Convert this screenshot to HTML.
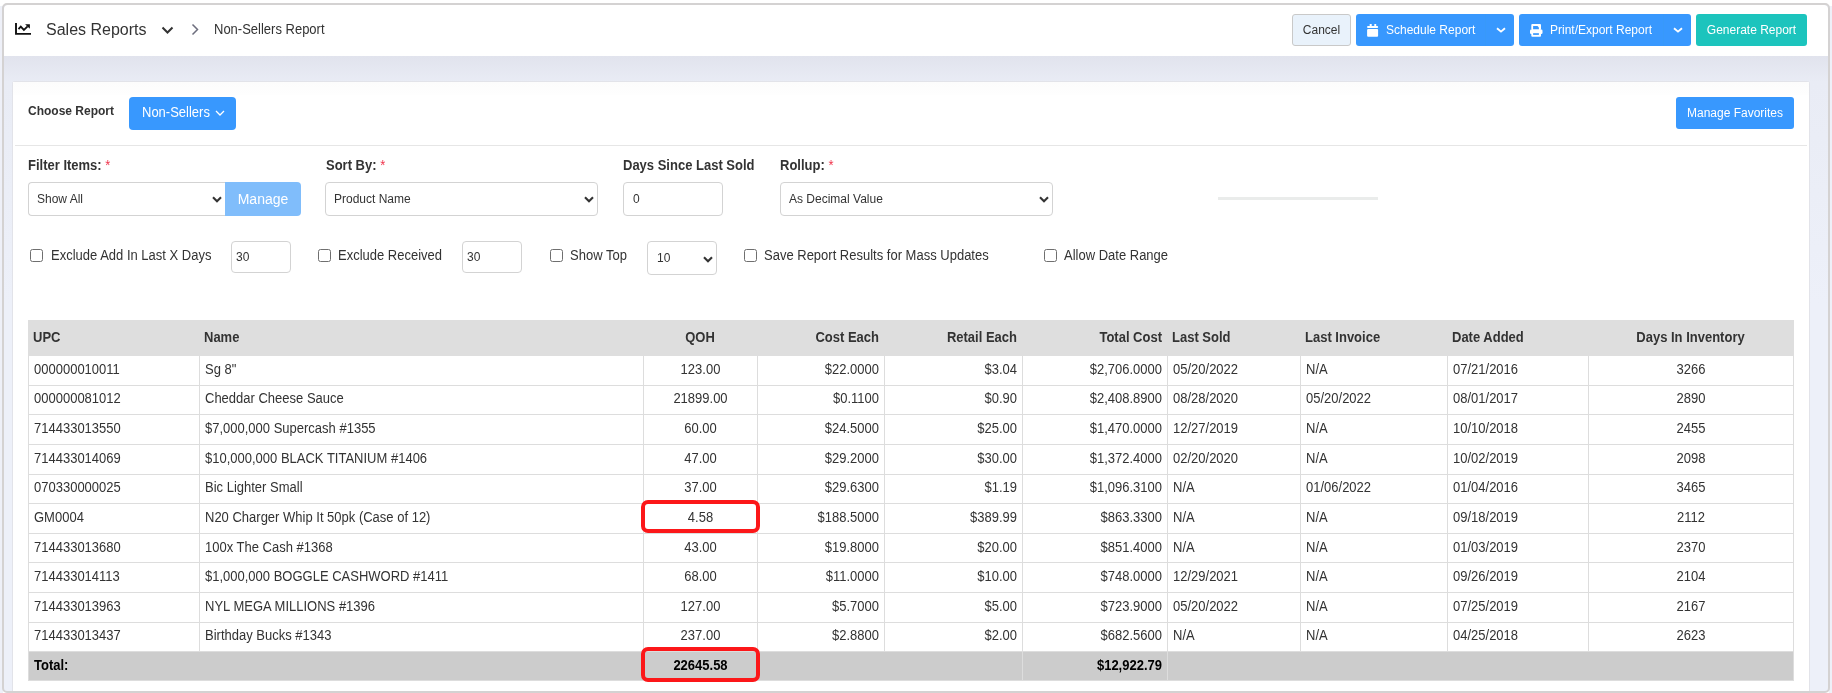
<!DOCTYPE html>
<html><head><meta charset="utf-8">
<style>
*{box-sizing:border-box;margin:0;padding:0}
html,body{width:1832px;height:693px;overflow:hidden;background:#fff;font-family:"Liberation Sans",sans-serif;color:#333;position:relative}
.abs{position:absolute}
#bg{position:absolute;left:3px;top:4px;width:1826px;height:688px;background:linear-gradient(to bottom,#e1e3ed 52px,#e9ecf5 78px,#edf0f9 300px);border-radius:5px}
#outl{position:absolute;left:0;top:6px;width:3px;height:687px;background:#eef0f8}
#outr{position:absolute;left:1829px;top:6px;width:3px;height:687px;background:#eef0f8}
#frame{position:absolute;left:2px;top:3px;width:1828px;height:690px;border:2px solid #d4d2d2;border-radius:5px;z-index:10}
#hdr{position:absolute;left:4px;top:5px;width:1824px;height:51px;background:#fff;border-radius:4px 4px 0 0}
#card{position:absolute;left:12px;top:81px;width:1798px;height:610px;background:#fff;border:1px solid #e2e3e9;border-bottom:none;border-radius:3px 3px 0 0}
.btn{position:absolute;border-radius:3px;color:#fff;font-size:12px;line-height:32px;white-space:nowrap}
.lbl{position:absolute;font-weight:bold;font-size:13px;color:#333;white-space:nowrap;line-height:15px;transform:scaleY(1.08);transform-origin:0 12px}
.req{color:#f0334b;font-weight:normal}
.inp{position:absolute;border:1px solid #d3d3d3;border-radius:4px;background:#fff;font-size:12px;color:#333;white-space:nowrap}
.chk{position:absolute;width:13px;height:13px;border:1px solid #6f6f6f;border-radius:2.5px;background:#fff}
.ct{position:absolute;font-size:13px;color:#333;white-space:nowrap;line-height:15px;transform:scaleY(1.08);transform-origin:0 12px}
.sel svg{position:absolute}
table{position:absolute;left:28px;top:320px;border-collapse:collapse;table-layout:fixed;font-size:13px;color:#333}
td,th{border:1px solid #dddddd;padding:0 5px 2px 5px;white-space:nowrap;overflow:hidden}
th{background:#dedede;border-color:#dedede;font-weight:bold;height:35px;text-align:left;padding-left:4px}
td{height:29.64px}
.r{text-align:right}.c{text-align:center}
.sy{display:inline-block;transform:scaleY(1.08);transform-origin:0 12px}
tr.tot td{background:#cccccc;color:#000;font-weight:bold;height:29px;padding-bottom:2px}
.red{position:absolute;border:4px solid #fc1719;border-radius:7px;z-index:5}
</style></head><body><div id="root" style="position:absolute;left:0;top:0;width:1832px;height:693px;will-change:transform">
<div id="outl"></div><div id="outr"></div><div id="bg"></div>
<div id="hdr"></div>
<div id="frame"></div>

<!-- header -->
<svg class="abs" style="left:12px;top:20px" width="22" height="18" viewBox="0 0 22 18">
  <path d="M4 3V13.9H19" fill="none" stroke="#111" stroke-width="1.9"/>
  <path d="M6.5 9.2L8.8 6.6L11.9 9.9L15.6 6.3" fill="none" stroke="#111" stroke-width="1.8" stroke-linejoin="miter"/>
  <path d="M13.1 4.2H17.9V8.8Z" fill="#111"/>
</svg>
<div class="abs" style="left:46px;top:20px;font-size:16px;line-height:19px;color:#333">Sales Reports</div>
<svg class="abs" style="left:161px;top:26px" width="13" height="9" viewBox="0 0 13 9"><path d="M1.5 1.5L6.5 6.5L11.5 1.5" fill="none" stroke="#333" stroke-width="2"/></svg>
<svg class="abs" style="left:190.5px;top:23px" width="9" height="13" viewBox="0 0 9 13"><path d="M1.5 1.5L6.5 6.5L1.5 11.5" fill="none" stroke="#6d6e7e" stroke-width="1.5"/></svg>
<div class="abs" style="left:214px;top:22px;font-size:13px;line-height:15px;color:#333;transform:scaleY(1.08);transform-origin:0 12px">Non-Sellers Report</div>

<div class="btn" style="left:1292px;top:14px;width:59px;height:32px;background:#e9f2fb;border:1px solid #c9c9c9;color:#333;text-align:center;line-height:30px">Cancel</div>
<div class="btn" style="left:1356px;top:14px;width:158px;height:32px;background:#3898fe">
  <svg class="abs" style="left:11px;top:10px" width="12" height="14" viewBox="0 0 12 14"><rect x="0.1" y="2" width="11" height="2.1" rx="0.8" fill="#fff"/><rect x="0.1" y="5" width="11" height="7.8" rx="1" fill="#fff"/><rect x="2.7" y="0" width="2" height="3" fill="#fff"/><rect x="7.3" y="0" width="1.9" height="3" fill="#fff"/></svg>
  <span class="abs" style="left:30px;top:0">Schedule Report</span>
  <div class="abs" style="left:129px;top:0;width:1px;height:32px;background:#3899f9"></div>
  <svg class="abs" style="left:140px;top:13px" width="10" height="6" viewBox="0 0 10 6"><path d="M1 1.2L5 4.6L9 1.2" fill="none" stroke="#fff" stroke-width="1.9"/></svg>
</div>
<div class="btn" style="left:1519px;top:14px;width:172px;height:32px;background:#3898fe">
  <svg class="abs" style="left:11px;top:10px" width="13" height="14" viewBox="0 0 13 14"><rect x="1.3" y="0" width="9.7" height="6" rx="1" fill="#fff"/><path d="M3.1 2.1H7.5L8.9 3.5V5.6H3.1Z" fill="#3898fe"/><rect x="0" y="5.5" width="12.5" height="4.4" rx="1.2" fill="#fff"/><rect x="1.3" y="8.7" width="9.7" height="4.1" rx="1" fill="#fff"/><rect x="3.1" y="9.2" width="5.8" height="1.7" fill="#3898fe"/></svg>
  <span class="abs" style="left:31px;top:0">Print/Export Report</span>
  <div class="abs" style="left:144px;top:0;width:1px;height:32px;background:#3899f9"></div>
  <svg class="abs" style="left:154px;top:13px" width="10" height="6" viewBox="0 0 10 6"><path d="M1 1.2L5 4.6L9 1.2" fill="none" stroke="#fff" stroke-width="1.9"/></svg>
</div>
<div class="btn" style="left:1696px;top:14px;width:111px;height:32px;background:#1cc4bd;text-align:center">Generate Report</div>

<!-- card -->
<div id="card"></div>
<div class="abs" style="left:13px;top:82px;width:1796px;height:13px;background:linear-gradient(#fcfcfc,#fdfdfd 50%,#fefefe)"></div>
<div class="lbl" style="left:28px;top:104px;font-size:12px;transform:none">Choose Report</div>
<div class="btn" style="left:129px;top:97px;width:107px;height:33px;border-radius:4px;background:#3898fe;font-size:13px;line-height:33px">
  <span class="abs" style="left:13px;top:-1px;transform:scaleY(1.08);transform-origin:0 21px">Non-Sellers</span>
  <svg class="abs" style="left:86px;top:13px" width="10" height="6" viewBox="0 0 10 6"><path d="M1 1L5 5L9 1" fill="none" stroke="#fff" stroke-width="1.3"/></svg>
</div>
<div class="btn" style="left:1676px;top:97px;width:118px;height:32px;border-radius:3px;background:#3898fe;text-align:center">Manage Favorites</div>
<div class="abs" style="left:15px;top:145px;width:1792px;height:1px;background:#e6e6e6"></div>

<div class="lbl" style="left:28px;top:158px">Filter Items: <span class="req">*</span></div>
<div class="lbl" style="left:326px;top:158px">Sort By: <span class="req">*</span></div>
<div class="lbl" style="left:623px;top:158px">Days Since Last Sold</div>
<div class="lbl" style="left:780px;top:158px">Rollup: <span class="req">*</span></div>
<!-- form row 1 -->
<div class="inp" style="left:28px;top:182px;width:198px;height:34px;border-radius:4px 0 0 4px;border-right:none"><span class="abs" style="left:8px;top:9px">Show All</span>
<svg class="abs" style="left:183px;top:12.8px" width="10" height="7" viewBox="0 0 10 7"><path d="M1 1.2L5 5.2L9 1.2" fill="none" stroke="#333" stroke-width="2.1"/></svg></div>
<div class="btn" style="left:225px;top:182px;width:76px;height:34px;border-radius:0 4px 4px 0;background:#80bdfb;font-size:14px;line-height:34px;text-align:center">Manage</div>
<div class="inp" style="left:325px;top:182px;width:273px;height:34px"><span class="abs" style="left:8px;top:9px">Product Name</span>
<svg class="abs" style="left:258px;top:13px" width="10" height="7" viewBox="0 0 10 7"><path d="M1 1.2L5 5.2L9 1.2" fill="none" stroke="#333" stroke-width="2.1"/></svg></div>
<div class="inp" style="left:623px;top:182px;width:100px;height:34px"><span class="abs" style="left:9px;top:9px">0</span></div>
<div class="inp" style="left:780px;top:182px;width:273px;height:34px"><span class="abs" style="left:8px;top:9px">As Decimal Value</span>
<svg class="abs" style="left:258px;top:13px" width="10" height="7" viewBox="0 0 10 7"><path d="M1 1.2L5 5.2L9 1.2" fill="none" stroke="#333" stroke-width="2.1"/></svg></div>
<div class="abs" style="left:1218px;top:197px;width:160px;height:3px;background:#eaeceb"></div>

<!-- form row 2 -->
<div class="chk" style="left:30px;top:249px"></div>
<div class="ct" style="left:51px;top:248px">Exclude Add In Last X Days</div>
<div class="inp" style="left:231px;top:241px;width:60px;height:32px"><span class="abs" style="left:4px;top:8px">30</span></div>
<div class="chk" style="left:318px;top:249px"></div>
<div class="ct" style="left:338px;top:248px">Exclude Received</div>
<div class="inp" style="left:462px;top:241px;width:60px;height:32px"><span class="abs" style="left:4px;top:8px">30</span></div>
<div class="chk" style="left:550px;top:249px"></div>
<div class="ct" style="left:570px;top:248px">Show Top</div>
<div class="inp" style="left:647px;top:241px;width:70px;height:34px"><span class="abs" style="left:9px;top:9px">10</span>
<svg class="abs" style="left:55px;top:13.5px" width="10" height="7" viewBox="0 0 10 7"><path d="M1 1.2L5 5.2L9 1.2" fill="none" stroke="#333" stroke-width="2.1"/></svg></div>
<div class="chk" style="left:744px;top:249px"></div>
<div class="ct" style="left:764px;top:248px">Save Report Results for Mass Updates</div>
<div class="chk" style="left:1044px;top:249px"></div>
<div class="ct" style="left:1064px;top:248px">Allow Date Range</div>

<!-- red highlight boxes -->
<div class="red" style="left:641px;top:500px;width:119px;height:33px"></div>
<div class="red" style="left:641px;top:647px;width:119px;height:35px"></div>

<table>
<colgroup><col style="width:171px"><col style="width:444px"><col style="width:114px"><col style="width:127px"><col style="width:138px"><col style="width:145px"><col style="width:133px"><col style="width:147px"><col style="width:141px"><col style="width:205px"></colgroup>
<tr><th class=""><span class="sy">UPC</span></th><th class=""><span class="sy">Name</span></th><th class="c"><span class="sy">QOH</span></th><th class="r"><span class="sy">Cost Each</span></th><th class="r"><span class="sy">Retail Each</span></th><th class="r"><span class="sy">Total Cost</span></th><th class=""><span class="sy">Last Sold</span></th><th class=""><span class="sy">Last Invoice</span></th><th class=""><span class="sy">Date Added</span></th><th class="c"><span class="sy">Days In Inventory</span></th></tr>
<tr><td class=""><span class="sy">000000010011</span></td><td class=""><span class="sy">Sg 8&quot;</span></td><td class="c"><span class="sy">123.00</span></td><td class="r"><span class="sy">$22.0000</span></td><td class="r"><span class="sy">$3.04</span></td><td class="r"><span class="sy">$2,706.0000</span></td><td class=""><span class="sy">05/20/2022</span></td><td class=""><span class="sy">N/A</span></td><td class=""><span class="sy">07/21/2016</span></td><td class="c"><span class="sy">3266</span></td></tr>
<tr><td class=""><span class="sy">000000081012</span></td><td class=""><span class="sy">Cheddar Cheese Sauce</span></td><td class="c"><span class="sy">21899.00</span></td><td class="r"><span class="sy">$0.1100</span></td><td class="r"><span class="sy">$0.90</span></td><td class="r"><span class="sy">$2,408.8900</span></td><td class=""><span class="sy">08/28/2020</span></td><td class=""><span class="sy">05/20/2022</span></td><td class=""><span class="sy">08/01/2017</span></td><td class="c"><span class="sy">2890</span></td></tr>
<tr><td class=""><span class="sy">714433013550</span></td><td class=""><span class="sy">$7,000,000 Supercash #1355</span></td><td class="c"><span class="sy">60.00</span></td><td class="r"><span class="sy">$24.5000</span></td><td class="r"><span class="sy">$25.00</span></td><td class="r"><span class="sy">$1,470.0000</span></td><td class=""><span class="sy">12/27/2019</span></td><td class=""><span class="sy">N/A</span></td><td class=""><span class="sy">10/10/2018</span></td><td class="c"><span class="sy">2455</span></td></tr>
<tr><td class=""><span class="sy">714433014069</span></td><td class=""><span class="sy">$10,000,000 BLACK TITANIUM #1406</span></td><td class="c"><span class="sy">47.00</span></td><td class="r"><span class="sy">$29.2000</span></td><td class="r"><span class="sy">$30.00</span></td><td class="r"><span class="sy">$1,372.4000</span></td><td class=""><span class="sy">02/20/2020</span></td><td class=""><span class="sy">N/A</span></td><td class=""><span class="sy">10/02/2019</span></td><td class="c"><span class="sy">2098</span></td></tr>
<tr><td class=""><span class="sy">070330000025</span></td><td class=""><span class="sy">Bic Lighter Small</span></td><td class="c"><span class="sy">37.00</span></td><td class="r"><span class="sy">$29.6300</span></td><td class="r"><span class="sy">$1.19</span></td><td class="r"><span class="sy">$1,096.3100</span></td><td class=""><span class="sy">N/A</span></td><td class=""><span class="sy">01/06/2022</span></td><td class=""><span class="sy">01/04/2016</span></td><td class="c"><span class="sy">3465</span></td></tr>
<tr><td class=""><span class="sy">GM0004</span></td><td class=""><span class="sy">N20 Charger Whip It 50pk (Case of 12)</span></td><td class="c"><span class="sy">4.58</span></td><td class="r"><span class="sy">$188.5000</span></td><td class="r"><span class="sy">$389.99</span></td><td class="r"><span class="sy">$863.3300</span></td><td class=""><span class="sy">N/A</span></td><td class=""><span class="sy">N/A</span></td><td class=""><span class="sy">09/18/2019</span></td><td class="c"><span class="sy">2112</span></td></tr>
<tr><td class=""><span class="sy">714433013680</span></td><td class=""><span class="sy">100x The Cash #1368</span></td><td class="c"><span class="sy">43.00</span></td><td class="r"><span class="sy">$19.8000</span></td><td class="r"><span class="sy">$20.00</span></td><td class="r"><span class="sy">$851.4000</span></td><td class=""><span class="sy">N/A</span></td><td class=""><span class="sy">N/A</span></td><td class=""><span class="sy">01/03/2019</span></td><td class="c"><span class="sy">2370</span></td></tr>
<tr><td class=""><span class="sy">714433014113</span></td><td class=""><span class="sy">$1,000,000 BOGGLE CASHWORD #1411</span></td><td class="c"><span class="sy">68.00</span></td><td class="r"><span class="sy">$11.0000</span></td><td class="r"><span class="sy">$10.00</span></td><td class="r"><span class="sy">$748.0000</span></td><td class=""><span class="sy">12/29/2021</span></td><td class=""><span class="sy">N/A</span></td><td class=""><span class="sy">09/26/2019</span></td><td class="c"><span class="sy">2104</span></td></tr>
<tr><td class=""><span class="sy">714433013963</span></td><td class=""><span class="sy">NYL MEGA MILLIONS #1396</span></td><td class="c"><span class="sy">127.00</span></td><td class="r"><span class="sy">$5.7000</span></td><td class="r"><span class="sy">$5.00</span></td><td class="r"><span class="sy">$723.9000</span></td><td class=""><span class="sy">05/20/2022</span></td><td class=""><span class="sy">N/A</span></td><td class=""><span class="sy">07/25/2019</span></td><td class="c"><span class="sy">2167</span></td></tr>
<tr><td class=""><span class="sy">714433013437</span></td><td class=""><span class="sy">Birthday Bucks #1343</span></td><td class="c"><span class="sy">237.00</span></td><td class="r"><span class="sy">$2.8800</span></td><td class="r"><span class="sy">$2.00</span></td><td class="r"><span class="sy">$682.5600</span></td><td class=""><span class="sy">N/A</span></td><td class=""><span class="sy">N/A</span></td><td class=""><span class="sy">04/25/2018</span></td><td class="c"><span class="sy">2623</span></td></tr>
<tr class="tot"><td colspan="2"><span class="sy">Total:</span></td><td class="c"><span class="sy">22645.58</span></td><td colspan="2"></td><td class="r"><span class="sy">$12,922.79</span></td><td colspan="4"></td></tr>
</table>
</div></body></html>
